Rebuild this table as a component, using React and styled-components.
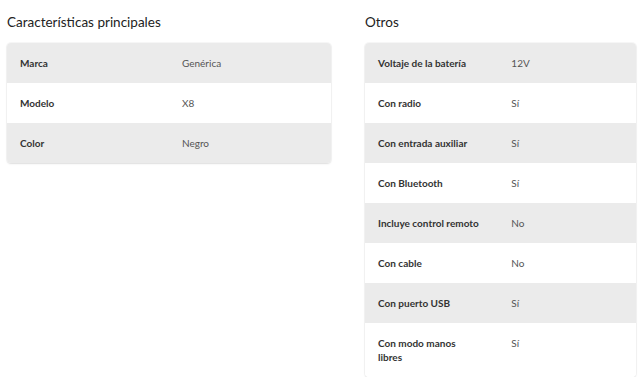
import React from 'react';
import styled, { createGlobalStyle } from 'styled-components';

const GlobalStyle = createGlobalStyle`
  body {
    margin: 0;
    background: #fff;
    font-family: Lato, "Liberation Sans", sans-serif;
    color: #333;
  }
`;

const Page = styled.div`
  display: grid;
  grid-template-columns: 324px 271px;
  column-gap: 34px;
  padding: 13px 0 0 7px;
  align-items: start;
`;

const Section = styled.section`
  display: flex;
  flex-direction: column;
`;

const Title = styled.h2`
  margin: 0 0 12px;
  font-size: 13.5px;
  line-height: 18px;
  font-weight: 400;
  color: #222;
`;

const Table = styled.div`
  border-radius: 4px;
  overflow: hidden;
  box-shadow: 0 1px 2px rgba(0, 0, 0, 0.1), 0 0 0 1px rgba(0, 0, 0, 0.03);
`;

const Row = styled.div`
  display: grid;
  grid-template-columns: 54% 1fr;
  background: ${p => (p.$shaded ? '#ebebeb' : '#fff')};
`;

const Label = styled.div`
  padding: 13px 30px 13px 13px;
  font-size: 10px;
  line-height: 14px;
  font-weight: 700;
  color: #333;
`;

const Value = styled.div`
  padding: 13px 13px 13px 0;
  font-size: 10px;
  line-height: 14px;
  color: #555;
`;

const principales = [
  ['Marca', 'Genérica'],
  ['Modelo', 'X8'],
  ['Color', 'Negro'],
];

const otros = [
  ['Voltaje de la batería', '12V'],
  ['Con radio', 'Sí'],
  ['Con entrada auxiliar', 'Sí'],
  ['Con Bluetooth', 'Sí'],
  ['Incluye control remoto', 'No'],
  ['Con cable', 'No'],
  ['Con puerto USB', 'Sí'],
  ['Con modo manos libres', 'Sí'],
];

function SpecTable({ title, rows }) {
  return (
    <Section>
      <Title>{title}</Title>
      <Table>
        {rows.map(([label, value], i) => (
          <Row key={label} $shaded={i % 2 === 0}>
            <Label>{label}</Label>
            <Value>{value}</Value>
          </Row>
        ))}
      </Table>
    </Section>
  );
}

export default function App() {
  return (
    <>
      <GlobalStyle />
      <Page>
        <SpecTable title="Características principales" rows={principales} />
        <SpecTable title="Otros" rows={otros} />
      </Page>
    </>
  );
}
